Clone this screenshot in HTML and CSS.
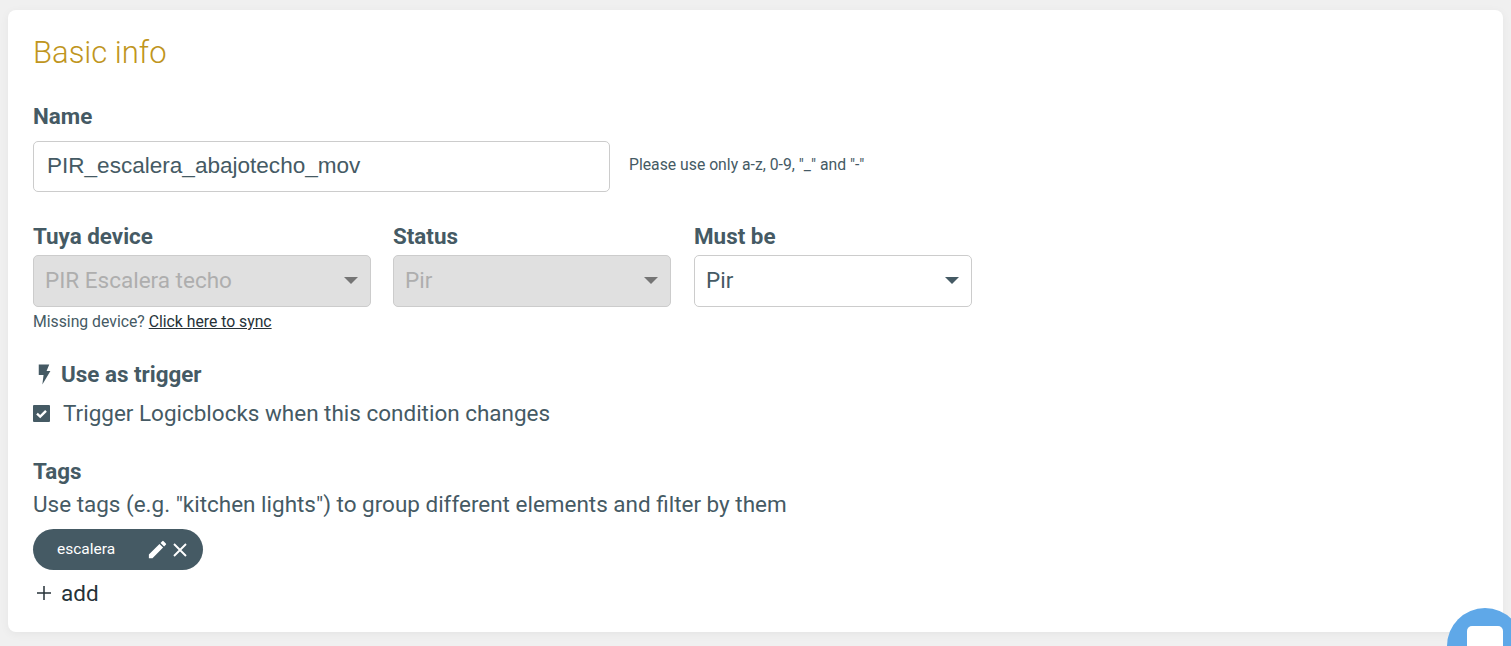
FILE: index.html
```html
<!DOCTYPE html>
<html lang="en">
<head>
<meta charset="utf-8">
<title>Basic info</title>
<link rel="stylesheet" href="styles.css">
</head>
<body>
<main class="card">
  <h2 class="title">Basic info</h2>
  <section class="name-section">
    <label class="label">Name</label>
    <div class="name-row">
      <div class="input name-input">PIR_escalera_abajotecho_mov</div>
      <span class="hint">Please use only a-z, 0-9, "_" and "-"</span>
    </div>
  </section>
  <section class="selects">
    <div class="field field-device">
      <label class="label">Tuya device</label>
      <div class="select disabled"><span>PIR Escalera techo</span><i class="caret"></i></div>
      <div class="missing">Missing device? <a class="sync">Click here to sync</a></div>
    </div>
    <div class="field field-status">
      <label class="label">Status</label>
      <div class="select disabled"><span>Pir</span><i class="caret"></i></div>
    </div>
    <div class="field field-must">
      <label class="label">Must be</label>
      <div class="select"><span>Pir</span><i class="caret"></i></div>
    </div>
  </section>
  <section class="trigger">
    <div class="label trigger-label">
      <svg class="bolt" viewBox="0 0 12 18" width="14" height="21"><path d="M1.5 0.5H10.5L8.2 6H11.5L4.6 17.5L5.6 9.5H1.5Z" fill="#455a64"/></svg>
      <span>Use as trigger</span>
    </div>
    <div class="check-row">
      <svg class="check" viewBox="0 0 17 17" width="17" height="17"><rect width="17" height="17" rx="1" fill="#455a64"/><path d="M4 8.6L7.2 11.6L13 5.8" fill="none" stroke="#fff" stroke-width="2.4"/></svg>
      <span>Trigger Logicblocks when this condition changes</span>
    </div>
  </section>
  <section class="tags">
    <div class="label">Tags</div>
    <p class="tags-help">Use tags (e.g. "kitchen lights") to group different elements and filter by them</p>
    <div class="chip">
      <span class="chip-text">escalera</span>
      <svg class="chip-icon" viewBox="0 0 24 24" width="23" height="23"><path d="M3 17.25V21h3.75L17.81 9.94l-3.75-3.75L3 17.25zM20.71 7.04a1 1 0 0 0 0-1.41l-2.34-2.34a1 1 0 0 0-1.41 0l-1.83 1.83 3.75 3.75 1.83-1.83z" fill="#fff"/></svg>
      <svg class="chip-close" viewBox="0 0 16 16" width="16" height="16"><path d="M2 2L14 14M14 2L2 14" stroke="#fff" stroke-width="1.9" fill="none"/></svg>
    </div>
    <div class="add">
      <svg class="plus" viewBox="0 0 14 14" width="14" height="14"><path d="M7 0V14M0 7H14" stroke="#263238" stroke-width="1.5" fill="none"/></svg>
      <span>add</span>
    </div>
  </section>
</main>
<div class="chat"><i class="chat-bubble"></i></div>
</body>
</html>
```
FILE: styles.css
```css
* { box-sizing: border-box; }
html, body { height: 100%; }
body {
  margin: 0;
  height: 646px;
  overflow: hidden;
  background: #f0f0f0;
  padding: 10px 0 0 8px;
  font-family: Roboto, "Liberation Sans", sans-serif;
  color: #455a64;
}
.card {
  width: 1495px;
  height: 622px;
  background: #fff;
  border-radius: 8px;
  box-shadow: 0 2px 10px rgba(0, 0, 0, 0.05);
  padding: 25px 25px 0;
}
.title {
  margin: 0;
  font-size: 31px;
  line-height: 36px;
  font-weight: 300;
  color: #bf9520;
}
.label {
  display: block;
  font-size: 22.4px;
  line-height: 26px;
  font-weight: 700;
}
.name-section { margin-top: 32px; }
.name-row {
  display: flex;
  align-items: center;
  gap: 19px;
  margin-top: 12px;
}
.input {
  border: 1px solid #ccc;
  border-radius: 5px;
  background: #fff;
  color: #455a64;
}
.name-input {
  width: 577px;
  height: 51px;
  padding: 0 13px;
  font-family: "Liberation Sans", Arial, sans-serif;
  font-size: 22.55px;
  line-height: 47px;
}
.hint {
  font-size: 15.75px;
  position: relative;
  top: -2px;
}
.selects {
  display: flex;
  margin-top: 31px;
  height: 111px;
}
.field-device { width: 338px; margin-right: 22px; }
.field-status { width: 278px; margin-right: 23px; }
.field-must { width: 278px; }
.select {
  display: flex;
  align-items: center;
  justify-content: space-between;
  height: 52px;
  margin-top: 6px;
  padding: 0 12px 2px 11px;
  border: 1px solid #ccc;
  border-radius: 5px;
  font-size: 22.5px;
  color: #455a64;
  background: #fff;
}
.select.disabled {
  background: #e0e0e0;
  color: #aeaeae;
}
.caret {
  width: 0;
  height: 0;
  border-left: 7px solid transparent;
  border-right: 7px solid transparent;
  border-top: 7px solid #455a64;
}
.select.disabled .caret { border-top-color: #757575; }
.missing {
  font-size: 15.75px;
  line-height: 17px;
  margin-top: 6px;
  white-space: nowrap;
}
.sync {
  color: #263238;
  text-decoration: underline;
}
.trigger { margin-top: 27px; }
.trigger-label {
  display: flex;
  align-items: center;
  gap: 10px;
  padding-left: 4px;
}
.check-row {
  display: flex;
  align-items: center;
  gap: 13px;
  margin-top: 13px;
  font-size: 22.47px;
  line-height: 26px;
}
.tags { margin-top: 32px; }
.tags-help {
  margin: 7px 0 0;
  font-size: 22.47px;
  line-height: 26px;
}
.chip {
  display: flex;
  align-items: center;
  width: 170px;
  height: 41px;
  margin-top: 12px;
  padding-left: 24px;
  border-radius: 21px;
  background: #455a64;
  color: #fff;
}
.chip-text {
  font-size: 15.5px;
  width: 89px;
  padding-bottom: 1px;
}
.chip-icon { flex: none; margin-right: 3px; }
.chip-close { flex: none; }
.add {
  display: flex;
  align-items: center;
  gap: 10px;
  margin-top: 9px;
  padding-left: 4px;
  font-size: 22.5px;
  line-height: 28px;
  color: #263238;
}
.chat {
  position: fixed;
  left: 1447px;
  top: 608px;
  width: 76px;
  height: 76px;
  border-radius: 50%;
  background: #5fa8e8;
}
.chat-bubble {
  position: absolute;
  left: 20px;
  top: 18px;
  width: 36px;
  height: 36px;
  border-radius: 5px;
  background: #fff;
}
```
